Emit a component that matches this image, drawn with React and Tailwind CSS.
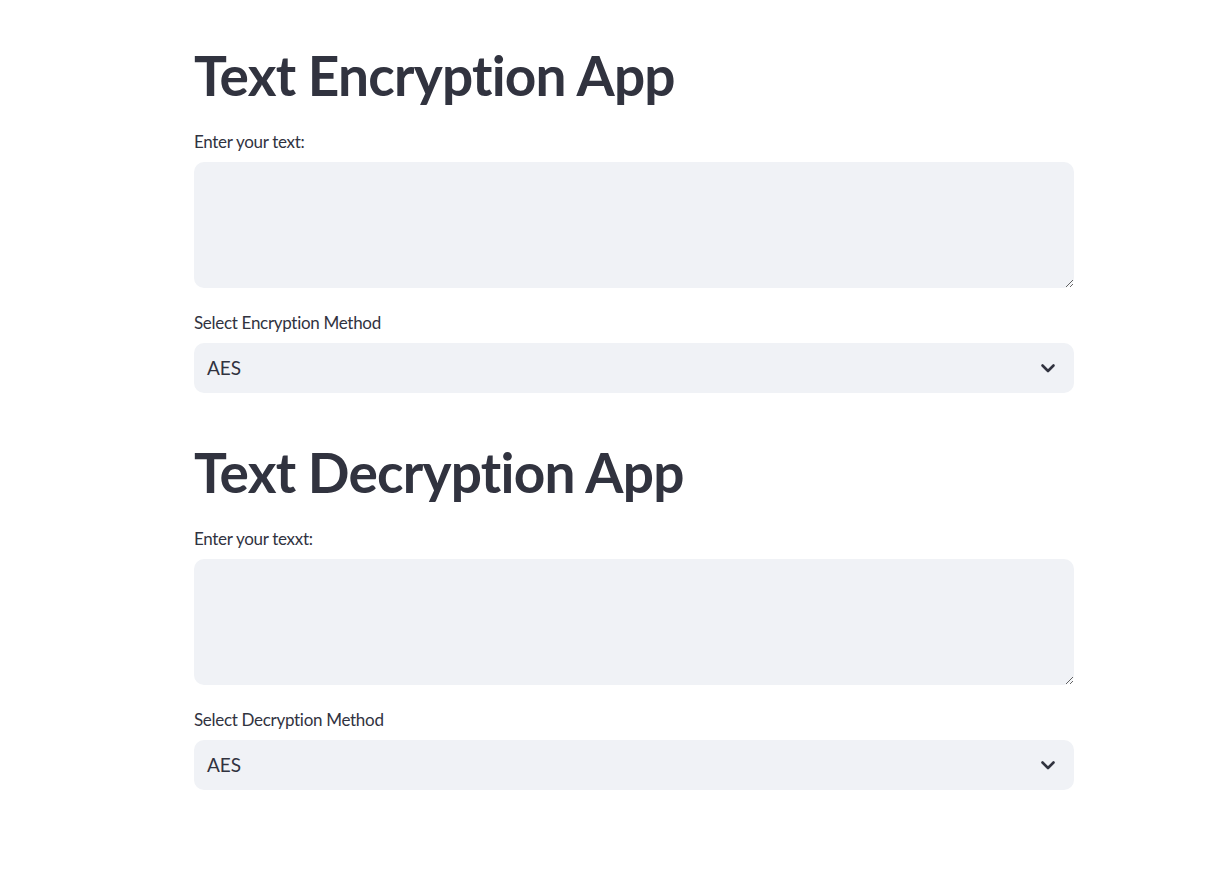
function Chevron() {
  return (
    <svg width="16" height="16" viewBox="0 0 16 16" className="text-[#31333F]">
      <path d="M2.5 5.5 L8 11 L13.5 5.5" fill="none" stroke="currentColor" strokeWidth="2.6" strokeLinecap="round" strokeLinejoin="round" />
    </svg>
  )
}

function Label({ children }) {
  return (
    <div className="h-[30px] flex items-center text-[17px] tracking-[-0.3px] text-[#31333F] mb-[5px]">{children}</div>
  )
}

function Section({ title, label, selectLabel }) {
  return (
    <section>
      <h1 className="text-[55px] leading-[66px] font-bold text-[#31333F] tracking-[-0.8px] mb-[19px]">{title}</h1>
      <Label>{label}</Label>
      <textarea className="block w-full h-[126px] bg-[#F0F2F6] rounded-[10px] resize-y outline-none px-[13px] py-[10px] text-[20px] text-[#31333F] mb-[20px]" />
      <Label>{selectLabel}</Label>
      <div className="h-[50px] bg-[#F0F2F6] rounded-[10px] flex items-center justify-between pl-[13px] pr-[18px]">
        <span className="text-[19px] text-[#31333F]">AES</span>
        <Chevron />
      </div>
    </section>
  )
}

export default function App() {
  return (
    <div className="min-h-screen bg-white [font-variant-ligatures:none]" style={{ fontFamily: 'Lato, "Noto Sans", sans-serif' }}>
      <div className="ml-[194px] w-[880px] pt-[42px] flex flex-col gap-[46px]">
        <Section title="Text Encryption App" label="Enter your text:" selectLabel="Select Encryption Method" />
        <Section title="Text Decryption App" label="Enter your texxt:" selectLabel="Select Decryption Method" />
      </div>
    </div>
  )
}
